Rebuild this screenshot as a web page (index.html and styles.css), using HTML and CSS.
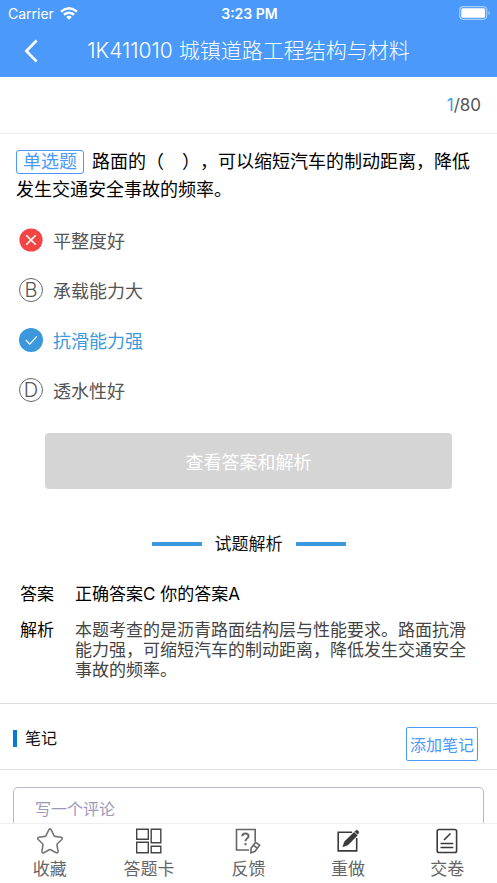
FILE: index.html
```html
<!DOCTYPE html>
<html lang="zh-CN">
<head>
<meta charset="utf-8">
<meta name="viewport" content="width=device-width, initial-scale=1">
<title>1K411010 城镇道路工程结构与材料</title>
<link rel="stylesheet" href="styles.css">
</head>
<body>
<div class="app">
  <header class="header">
    <div class="status">
      <div class="carrier">Carrier
        <svg width="18" height="13" viewBox="0 0 18 13" fill="none" stroke="#fff" stroke-width="2.4"><path d="M1 4.7Q9-2 17 4.7M3.9 7.8Q9 3.6 14.1 7.8"/><path d="M6.1 9.9Q9 7.5 11.9 9.9L9 12.8Z" fill="#fff" stroke="none"/></svg>
      </div>
      <div class="clock">3:23 PM</div>
      <div class="battery">
        <svg width="32" height="14" viewBox="0 0 32 14"><rect x=".7" y=".7" width="27" height="12.6" rx="3.5" fill="none" stroke="#a4cdff" stroke-width="1.2"/><rect x="2.3" y="2.3" width="23.8" height="9.4" rx="1.5" fill="#fff"/><path d="M29.5 4.8q2.8 2.2 0 4.4z" fill="#a4cdff"/></svg>
      </div>
    </div>
    <div class="nav">
      <button class="back" type="button" aria-label="返回"><svg width="14" height="24" viewBox="0 0 14 24" fill="none" stroke="#fff" stroke-width="2.6"><path d="M12.6 1.5 2.3 12l10.3 10.5"/></svg></button>
      <h1 class="title">1K411010 城镇道路工程结构与材料</h1>
    </div>
  </header>

  <main class="content">
    <div class="progress"><span class="current">1</span>/80</div>

    <section class="question">
      <div class="stem"><span class="tag">单选题</span>路面的（　），可以缩短汽车的制动距离，降低发生交通安全事故的频率。</div>
      <div class="options">
        <button class="option" type="button">
          <svg class="mark" viewBox="0 0 24 24"><circle cx="12" cy="12" r="11.6" fill="#f44545"/><path d="m7.2 7.2 9.6 9.6m0-9.6-9.6 9.6" stroke="#fff" stroke-width="1.6"/></svg>平整度好</button>
        <button class="option" type="button"><span class="mark letter">B</span>承载能力大</button>
        <button class="option correct" type="button">
          <svg class="mark" viewBox="0 0 24 24"><circle cx="12" cy="12" r="12" fill="#3b98dc"/><path d="m6.8 12 4 4.2 7-7.8" fill="none" stroke="#fff" stroke-width="1.2"/></svg>抗滑能力强</button>
        <button class="option" type="button"><span class="mark letter">D</span>透水性好</button>
      </div>
      <button class="reveal" type="button">查看答案和解析</button>
    </section>

    <section class="analysis">
      <h2 class="divider">试题解析</h2>
      <dl class="details">
        <dt>答案</dt><dd class="answer">正确答案C 你的答案A</dd>
        <dt>解析</dt><dd>本题考查的是沥青路面结构层与性能要求。路面抗滑能力强，可缩短汽车的制动距离，降低发生交通安全事故的频率。</dd>
      </dl>
    </section>

    <section class="notes">
      <h2 class="notes-title">笔记</h2>
      <button class="add-note" type="button">添加笔记</button>
    </section>

    <section class="comment">
      <textarea class="comment-box" placeholder="写一个评论" aria-label="写一个评论"></textarea>
    </section>
  </main>

  <nav class="tabs">
    <button class="tab" type="button">
      <svg width="28" height="28" viewBox="0 0 28 28" fill="none" stroke="#777" stroke-width="1.6" stroke-linejoin="round"><path d="M12.8 2.8Q14 .8 15.2 2.8L18 8.6Q18.3 9.3 19 9.4L25.2 10.3Q27.3 10.8 25.8 12.5L21.4 16.8Q20.9 17.3 21 18L22.1 24.3Q22.2 26.4 20.2 25.7L14.7 22.8Q14 22.5 13.3 22.8L7.8 25.7Q5.8 26.4 5.9 24.3L7 18Q7.1 17.3 6.6 16.8L2.2 12.5Q.7 10.8 2.8 10.3L9 9.4Q9.7 9.3 10 8.6Z"/></svg>
      收藏</button>
    <button class="tab" type="button">
      <svg width="28" height="28" viewBox="0 0 28 28" fill="none" stroke="#444" stroke-width="1.4"><path d="M1.7 2.2h11.6v10H1.7zM16.2 2.2h9.6v13.6h-9.6zM1.7 15.2h11.6v10.6H1.7zM16.2 19.2h9.6v6.6h-9.6z"/></svg>
      答题卡</button>
    <button class="tab" type="button">
      <svg width="28" height="28" viewBox="0 0 28 28" fill="none" stroke="#666" stroke-width="1.6"><path d="M15 23H2.5V2.5h18.7v12.3"/><path d="M8.2 9.3Q8.4 6.4 11.4 6.4T14.6 9Q14.6 10.4 13 11.5T11.5 14.3M11.5 16v2.2" stroke-width="2"/><path d="m17 21.3 4.6-5.9 4 2.8-4.6 6.1-4 1.6zM19.4 18.3l3.6 2.6"/></svg>
      反馈</button>
    <button class="tab" type="button">
      <svg width="28" height="28" viewBox="0 0 28 28" fill="none" stroke="#3b3b3b" stroke-width="1.6"><path d="M18 5.2H4.2v18.7h18.5V11"/><path d="m8.8 19.8 1.8-5.2L20.1 5.3l3.2 3.2-9.4 9.4zM20.9 4.5l1-1q1.3-.7 2.3.4 1.1 1.2.2 2.4l-1 1z" fill="#3b3b3b" stroke="#3b3b3b" stroke-width=".5"/></svg>
      重做</button>
    <button class="tab" type="button">
      <svg width="28" height="28" viewBox="0 0 28 28" fill="none" stroke="#3b3b3b" stroke-width="1.6"><rect x="4.2" y="2.5" width="19.4" height="23" rx="1.8"/><path d="m11 13 6.5-6.5M7.5 16.5h12.8M7.5 20.5h12.8"/></svg>
      交卷</button>
  </nav>
</div>
</body>
</html>
```
FILE: styles.css
```css
* {
  box-sizing: border-box;
}

body,
h1,
h2,
dl,
dd {
  margin: 0;
}

body,
button,
textarea {
  font-family: Inter, "Noto Sans CJK SC", sans-serif;
}

button {
  padding: 0;
  border: 0;
  background: none;
  color: inherit;
}

svg {
  display: block;
}

.app {
  display: flex;
  flex-direction: column;
  height: 100vh;
  background: #fff;
  color: #111;
}

.header {
  flex: none;
  background: #4a99fb;
  color: #fff;
}

.status {
  display: grid;
  grid-template-columns: 1fr auto 1fr;
  align-items: center;
  height: 26px;
  padding: 0 6px 0 8px;
  font-size: 14px;
}

.carrier {
  display: flex;
  align-items: center;
  gap: 6px;
}

.clock {
  font-weight: 600;
}

.battery {
  justify-self: end;
}

.nav {
  display: grid;
  grid-template-columns: 38px 1fr 38px;
  align-items: center;
  height: 51px;
  padding-bottom: 2px;
}

.back {
  justify-self: end;
}

.title {
  font-size: 21px;
  font-weight: 300;
  text-align: center;
  line-height: 30px;
}

.content {
  flex: 1;
  min-height: 0;
  overflow-y: auto;
  scrollbar-width: none;
}

.progress {
  padding: 0 16px;
  border-bottom: 1px solid #eee;
  color: #555;
  font-size: 17px;
  line-height: 56px;
  text-align: right;
}

.current {
  color: #3b9fe6;
}

.question {
  padding: 14px 16px 0;
}

.stem {
  color: #000;
  font-size: 18px;
  line-height: 28px;
  text-spacing-trim: space-all;
}

.tag {
  display: inline-block;
  margin-right: 8px;
  padding: 0 6px;
  border: 1px solid #4a99fb;
  border-radius: 3px;
  color: #4a99fb;
  line-height: 22px;
}

.options {
  margin-top: 11px;
}

.option {
  display: flex;
  align-items: center;
  gap: 10px;
  width: 100%;
  height: 50px;
  padding-left: 3px;
  color: #555;
  font-size: 18px;
}

.correct {
  color: #3b98dc;
}

.mark {
  flex: none;
  width: 24px;
  height: 24px;
}

.letter {
  border: 1px solid #666;
  border-radius: 50%;
  font-size: 20px;
  font-weight: 300;
  line-height: 22px;
}

.reveal {
  display: block;
  width: calc(100% - 58px);
  height: 56px;
  margin: 18px auto 0;
  border-radius: 4px;
  background: #d5d5d5;
  color: #fff;
  font-size: 18px;
}

.analysis {
  padding: 43px 20px 23px;
  border-bottom: 1px solid #ddd;
}

.divider {
  display: flex;
  align-items: center;
  justify-content: center;
  gap: 13px;
  font-size: 17px;
  font-weight: 400;
  line-height: 24px;
}

.divider::before,
.divider::after {
  content: "";
  width: 50px;
  height: 4px;
  background: #3b98dc;
}

.details {
  display: grid;
  grid-template-columns: 55px 1fr;
  row-gap: 16px;
  margin-top: 28px;
  color: #444;
  font-size: 17px;
  line-height: 20px;
}

.details dt,
.answer {
  color: #000;
}

.notes {
  display: flex;
  align-items: flex-start;
  justify-content: space-between;
  padding: 23px 19px 8px 13px;
  border-bottom: 1px solid #ddd;
}

.notes-title {
  display: flex;
  align-items: center;
  gap: 8px;
  font-size: 16px;
  font-weight: 400;
  line-height: 22px;
}

.notes-title::before {
  content: "";
  width: 4px;
  height: 17px;
  background: #0a7bd3;
}

.add-note {
  height: 34px;
  padding: 0 3px;
  border: 1px solid #4a99fb;
  border-radius: 2px;
  color: #4a99fb;
  font-size: 16px;
}

.comment {
  padding: 17px 13px;
}

.comment-box {
  display: block;
  width: 100%;
  height: 100px;
  padding: 10px 21px;
  border: 1px solid #b9b8cf;
  border-radius: 5px;
  resize: none;
  font-size: 16px;
  line-height: 22px;
}

.comment-box::placeholder {
  color: #9a9ab8;
}

.tabs {
  display: grid;
  grid-template-columns: repeat(5, 1fr);
  flex: none;
  height: 60px;
  border-top: 1px solid #eee;
  background: #fff;
}

.tab {
  display: flex;
  flex-direction: column;
  align-items: center;
  padding-top: 3px;
  color: #666;
  font-size: 17px;
  line-height: 28px;
}
```
